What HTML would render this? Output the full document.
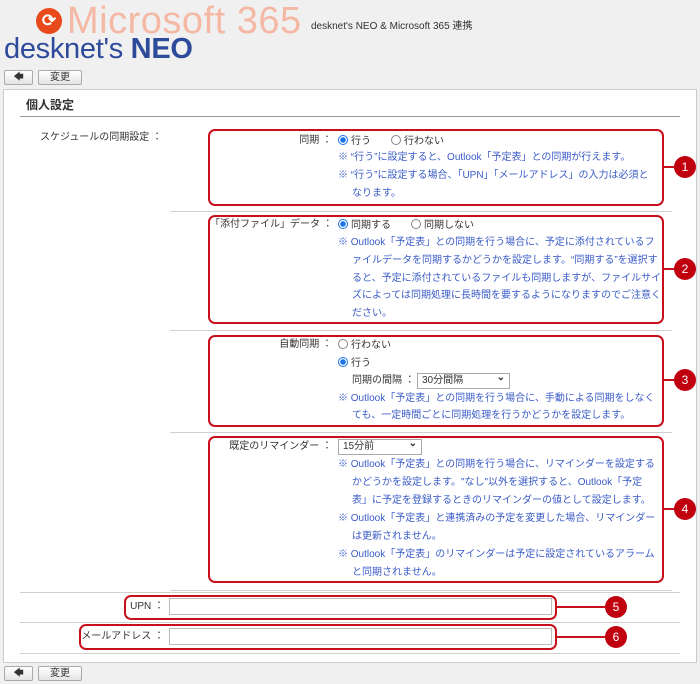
<!DOCTYPE html>
<html><head><meta charset="utf-8"><style>
*{margin:0;padding:0;box-sizing:border-box}
body{width:700px;height:684px;background:#f0f0f0;position:relative;overflow:hidden;font-family:"Liberation Sans","Noto Sans CJK JP",sans-serif;font-size:10px;color:#333}
.a{position:absolute;white-space:nowrap;line-height:12px}
.n{color:#3a5bc7}
.lb{text-align:right}
.box{position:absolute;border:2px solid #c8101a;border-radius:7px}
.ln{position:absolute;height:1px;background:#d0d0d0}
.c{position:absolute;width:22px;height:22px;border-radius:50%;background:#c0000f;color:#fff;font-size:12px;line-height:22px;text-align:center}
.cl{position:absolute;height:2px;background:#c8101a}
.btn{position:absolute;height:15px;border:1px solid #aaa;border-radius:2px;background:linear-gradient(#fff,#e4e4e4);font-size:10px;text-align:center;line-height:13px}
.r{display:inline-block;width:10px;height:10px;border:1px solid #888;border-radius:50%;vertical-align:-1px;margin-right:3px;background:#fff}
.r.on{border-color:#1a73e8;background:radial-gradient(#1a73e8 0 2.5px,#fff 3px)}
.sel{position:absolute;height:16px;border:1px solid #aaa;background:#fff;font-size:10px;line-height:14px;padding-left:4px}
.sel:after{content:"⌄";position:absolute;right:4px;top:-3px;font-weight:bold}
.inp{position:absolute;height:17px;border:1px solid #bbb;background:#fff}
</style></head><body>
<div style="position:absolute;left:36px;top:8px;width:26px;height:26px;border-radius:50%;background:#e84a1c;color:#fff;font-size:17px;line-height:25px;text-align:center;font-weight:bold">⟳</div>
<div class="a" style="left:67px;top:0px;font-size:38px;line-height:42px;color:#f4b8a4;letter-spacing:0.5px">Microsoft 365</div>
<div class="a" style="left:4px;top:32px;font-size:29px;line-height:34px;color:#2e4a9a;font-weight:bold;letter-spacing:-0.3px"><span style="font-weight:normal">desknet's</span> NEO</div>
<div class="a" style="left:311px;top:21px;font-size:10px">desknet's NEO &amp; Microsoft 365 連携</div>
<div class="btn" style="left:4px;top:70px;width:29px">🡄</div>
<div class="btn" style="left:38px;top:70px;width:44px">変更</div>
<div style="position:absolute;left:3px;top:89px;width:694px;height:574px;background:#fff;border:1px solid #ccc"></div>
<div class="a" style="left:26px;top:98px;font-size:12px;font-weight:bold;line-height:14px">個人設定</div>
<div style="position:absolute;left:20px;top:116px;width:660px;height:1px;background:#999"></div>
<div class="a" style="left:40px;top:132px">スケジュールの同期設定 ：</div>

<div class="box" style="left:208px;top:129px;width:456px;height:77px"></div>
<div class="a lb" style="left:210px;width:122px;top:135px">同期 ：</div>
<div class="a" style="left:338px;top:135px"><span class="r on"></span>行う　　<span class="r"></span>行わない</div>
<div class="a n" style="left:338px;top:152px">※ “行う”に設定すると、Outlook「予定表」との同期が行えます。</div>
<div class="a n" style="left:338px;top:170px">※ “行う”に設定する場合、「UPN」「メールアドレス」の入力は必須と</div>
<div class="a n" style="left:352px;top:188px">なります。</div>
<div class="ln" style="left:170px;top:211px;width:502px"></div>

<div class="box" style="left:208px;top:215px;width:456px;height:109px"></div>
<div class="a lb" style="left:210px;width:122px;top:219px">「添付ファイル」データ ：</div>
<div class="a" style="left:338px;top:219px"><span class="r on"></span>同期する　　<span class="r"></span>同期しない</div>
<div class="a n" style="left:338px;top:237px">※ Outlook「予定表」との同期を行う場合に、予定に添付されているフ</div>
<div class="a n" style="left:352px;top:255px">ァイルデータを同期するかどうかを設定します。“同期する”を選択す</div>
<div class="a n" style="left:352px;top:273px">ると、予定に添付されているファイルも同期しますが、ファイルサイ</div>
<div class="a n" style="left:352px;top:290px">ズによっては同期処理に長時間を要するようになりますのでご注意く</div>
<div class="a n" style="left:352px;top:308px">ださい。</div>
<div class="ln" style="left:170px;top:330px;width:502px"></div>

<div class="box" style="left:208px;top:335px;width:456px;height:92px"></div>
<div class="a lb" style="left:210px;width:122px;top:339px">自動同期 ：</div>
<div class="a" style="left:338px;top:339px"><span class="r"></span>行わない</div>
<div class="a" style="left:338px;top:357px"><span class="r on"></span>行う</div>
<div class="a" style="left:352px;top:375px">同期の間隔 ：</div>
<div class="sel" style="left:417px;top:373px;width:93px">30分間隔</div>
<div class="a n" style="left:338px;top:393px">※ Outlook「予定表」との同期を行う場合に、手動による同期をしなく</div>
<div class="a n" style="left:352px;top:410px">ても、一定時間ごとに同期処理を行うかどうかを設定します。</div>
<div class="ln" style="left:170px;top:432px;width:502px"></div>

<div class="box" style="left:208px;top:436px;width:456px;height:147px"></div>
<div class="a lb" style="left:210px;width:122px;top:441px">既定のリマインダー ：</div>
<div class="sel" style="left:338px;top:439px;width:84px">15分前</div>
<div class="a n" style="left:338px;top:459px">※ Outlook「予定表」との同期を行う場合に、リマインダーを設定する</div>
<div class="a n" style="left:352px;top:477px">かどうかを設定します。"なし"以外を選択すると、Outlook「予定</div>
<div class="a n" style="left:352px;top:495px">表」に予定を登録するときのリマインダーの値として設定します。</div>
<div class="a n" style="left:338px;top:513px">※ Outlook「予定表」と連携済みの予定を変更した場合、リマインダー</div>
<div class="a n" style="left:352px;top:531px">は更新されません。</div>
<div class="a n" style="left:338px;top:549px">※ Outlook「予定表」のリマインダーは予定に設定されているアラーム</div>
<div class="a n" style="left:352px;top:567px">と同期されません。</div>
<div class="ln" style="left:170px;top:590px;width:502px"></div>
<div class="ln" style="left:20px;top:592px;width:660px"></div>

<div class="box" style="left:124px;top:595px;width:433px;height:25px"></div>
<div class="a lb" style="left:100px;width:64px;top:601px">UPN ：</div>
<div class="inp" style="left:169px;top:598px;width:383px"></div>
<div class="ln" style="left:20px;top:622px;width:660px"></div>
<div class="box" style="left:79px;top:624px;width:478px;height:26px"></div>
<div class="a lb" style="left:70px;width:94px;top:631px">メールアドレス ：</div>
<div class="inp" style="left:169px;top:628px;width:383px"></div>
<div class="ln" style="left:20px;top:653px;width:660px"></div>

<div class="cl" style="left:663px;top:166px;width:12px"></div><div class="c" style="left:674px;top:156px">1</div>
<div class="cl" style="left:663px;top:268px;width:12px"></div><div class="c" style="left:674px;top:258px">2</div>
<div class="cl" style="left:663px;top:379px;width:12px"></div><div class="c" style="left:674px;top:369px">3</div>
<div class="cl" style="left:663px;top:508px;width:12px"></div><div class="c" style="left:674px;top:498px">4</div>
<div class="cl" style="left:556px;top:606px;width:52px"></div><div class="c" style="left:605px;top:596px">5</div>
<div class="cl" style="left:556px;top:636px;width:52px"></div><div class="c" style="left:605px;top:626px">6</div>

<div class="btn" style="left:4px;top:666px;width:29px">🡄</div>
<div class="btn" style="left:38px;top:666px;width:44px">変更</div>
</body></html>
